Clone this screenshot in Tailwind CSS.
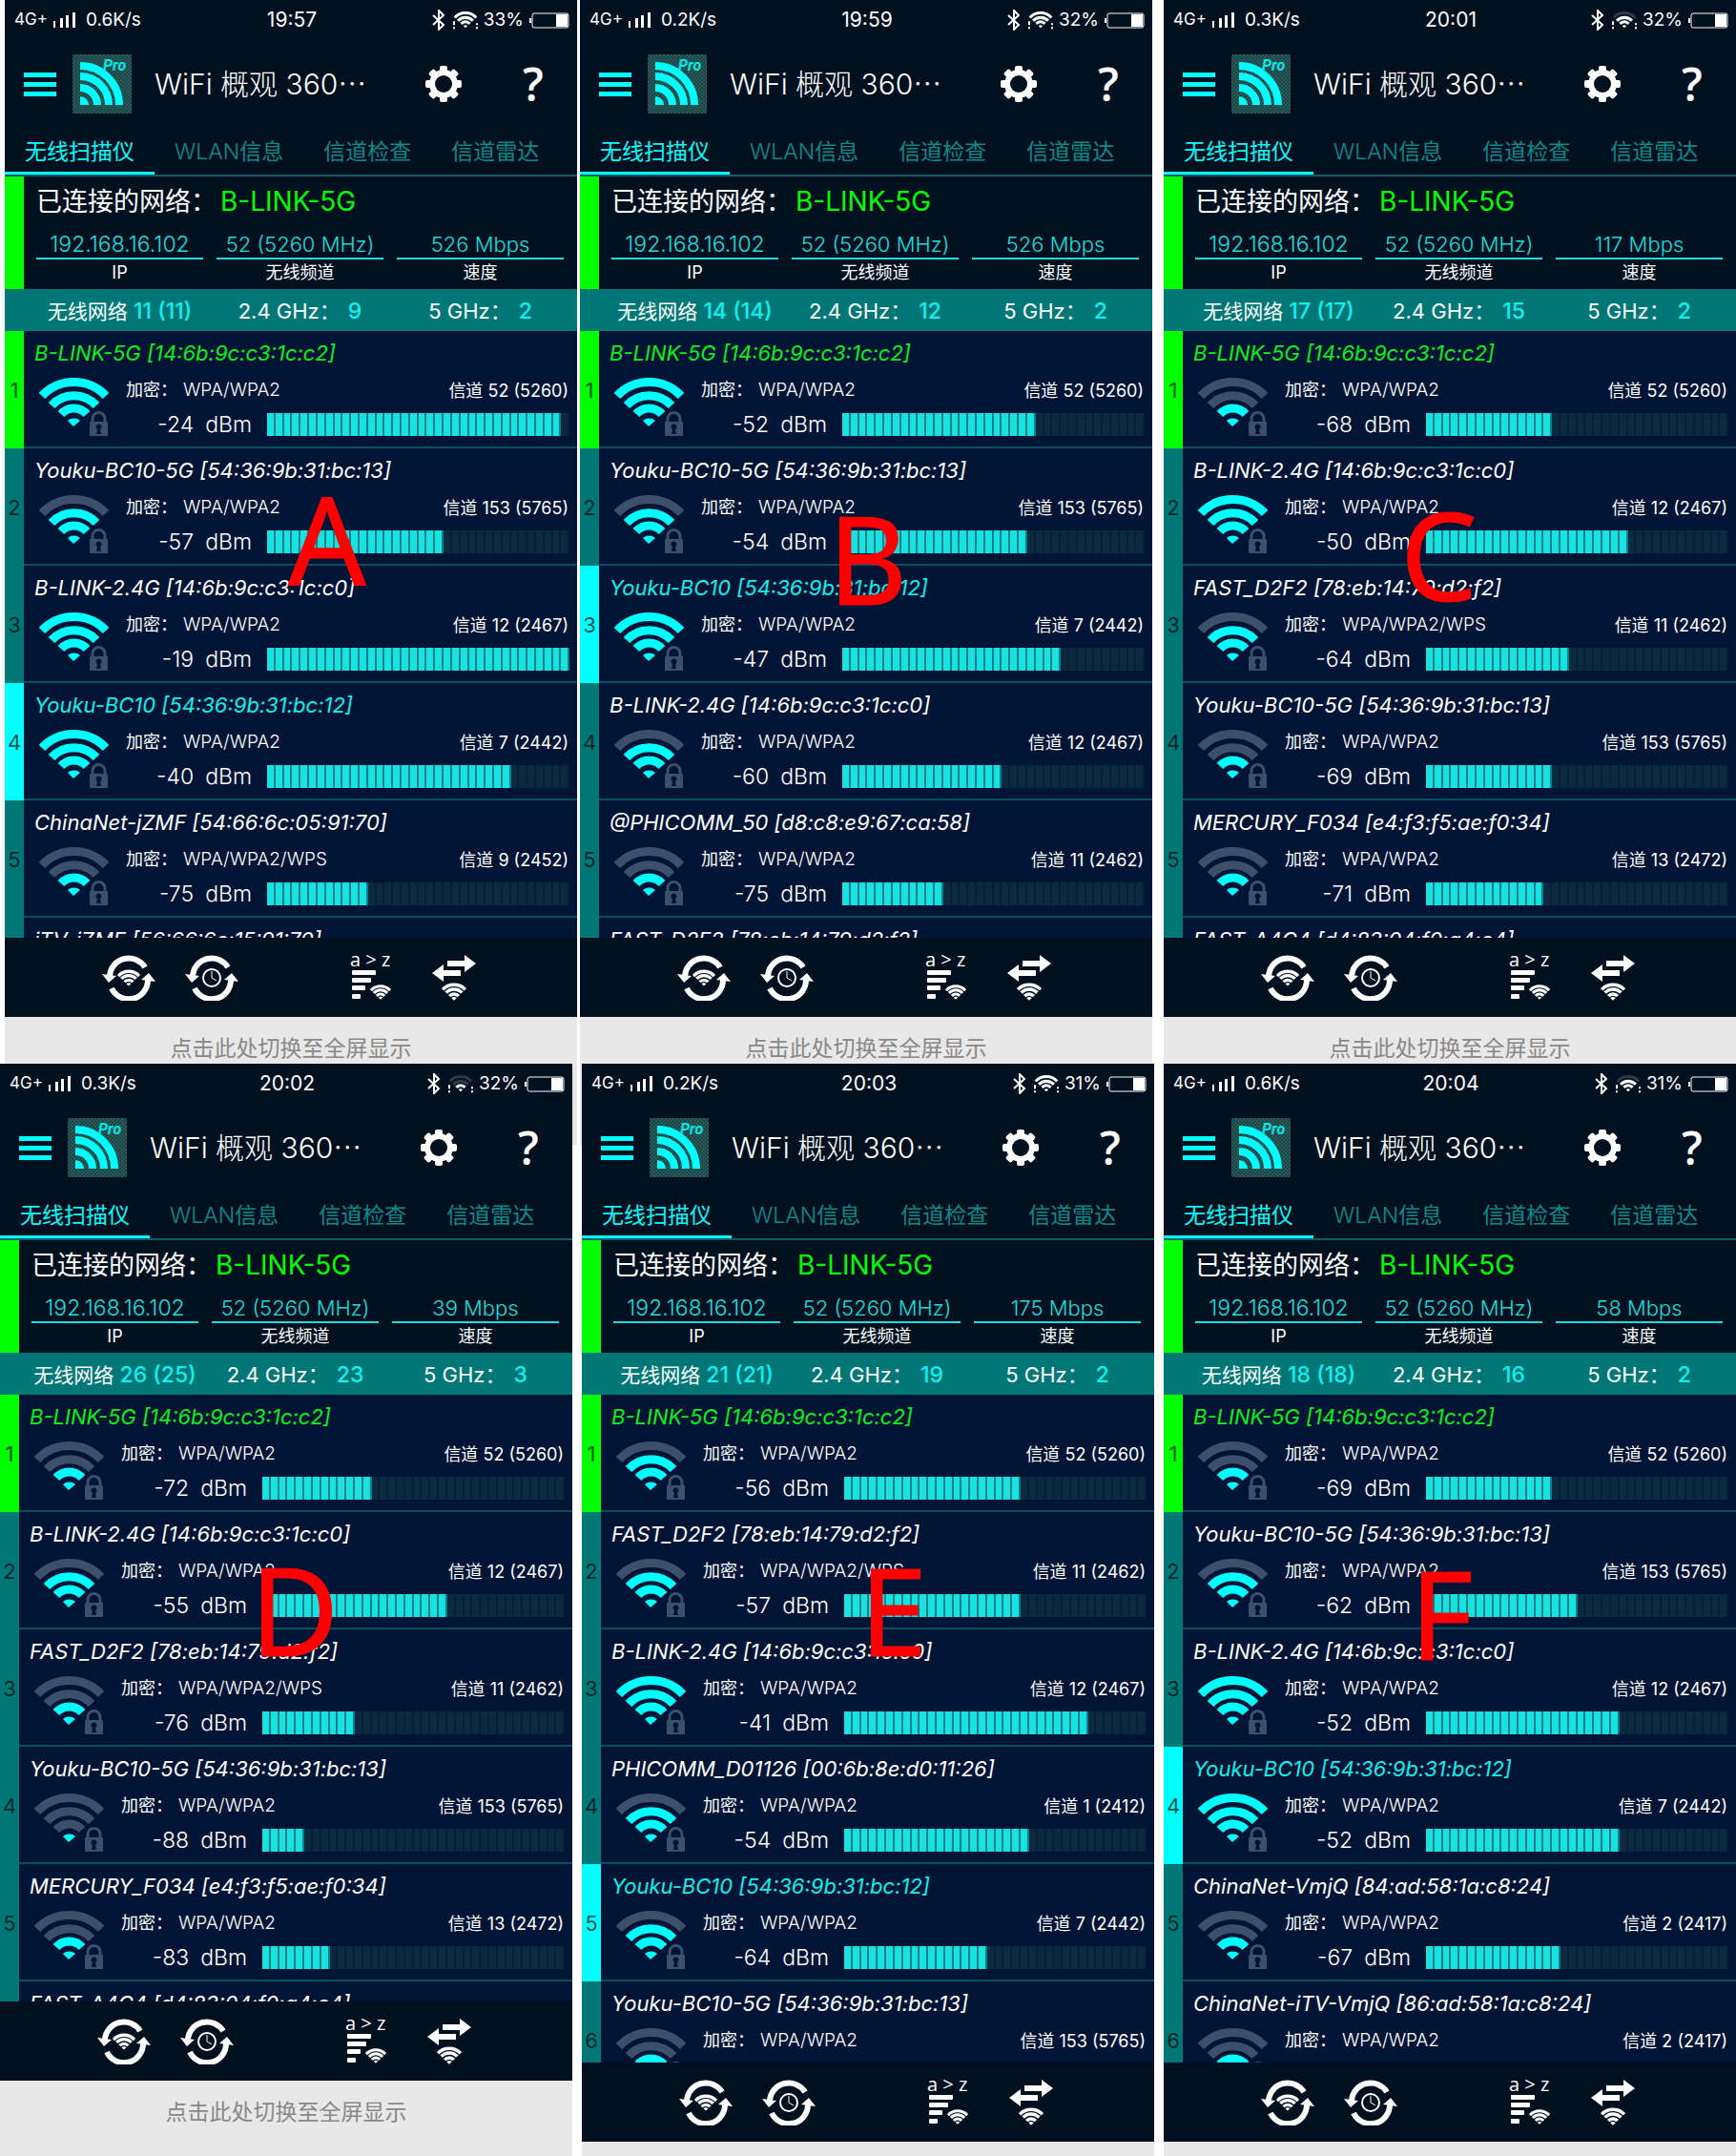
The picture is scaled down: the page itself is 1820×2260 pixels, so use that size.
<!DOCTYPE html>
<html lang="zh-CN">
<head>
    <meta charset="UTF-8">
    <meta name="viewport" content="width=device-width, initial-scale=1.0">
    <title>WiFi 概观 360 Pro</title>
    <script src="https://cdn.jsdelivr.net/npm/@tailwindcss/browser@4"></script>
</head>
<body class="bg-white text-white font-[Inter,'Noto_Sans_CJK_SC',sans-serif]">
    <svg class="absolute size-0">
        <defs>
            <pattern id="dots" width="4" height="4" patternUnits="userSpaceOnUse">
                <rect width="4" height="4" fill="#1b4446"/>
                <rect width="2" height="2" fill="#2c5a58"/>
                <rect x="2" y="2" width="2" height="2" fill="#2c5a58"/>
            </pattern>
        </defs>
        <symbol id="gear" viewBox="0 0 38 38">
            <g fill="currentColor">
                <rect x="15" y="0" width="8" height="38" rx="2"/>
                <rect x="15" y="0" width="8" height="38" rx="2" transform="rotate(45 19 19)"/>
                <rect x="15" y="0" width="8" height="38" rx="2" transform="rotate(90 19 19)"/>
                <rect x="15" y="0" width="8" height="38" rx="2" transform="rotate(135 19 19)"/>
                <circle cx="19" cy="19" r="15"/>
            </g>
            <circle cx="19" cy="19" r="9" fill="#00101f"/>
        </symbol>
        <symbol id="bt" viewBox="0 0 14 22">
            <path d="M1 6 L12 16 L7 21 V1 L12 6 L1 16" fill="none" stroke="currentColor" stroke-width="2"/>
        </symbol>
        <symbol id="wifi" viewBox="0 0 73 52">
            <g fill="none" stroke="currentColor" stroke-width="10">
                <path d="M3 20 A46 46 0 0 1 70 20"/>
                <path d="M13 29 A32 32 0 0 1 60 29"/>
                <path d="M23 39 A18 18 0 0 1 50 39"/>
            </g>
            <path d="M29 45 A10 10 0 0 1 44 45 L36 52 Z" fill="currentColor"/>
        </symbol>
        <symbol id="cycle" viewBox="0 0 56 48">
            <g fill="none" stroke="currentColor" stroke-width="6">
                <path d="M8 22 A20 20 0 0 1 45 13"/>
                <path d="M10 35 A20 20 0 0 0 48 26"/>
            </g>
            <path d="M0 20 L15 22 L7 29 Z M56 28 L41 26 L49 19 Z" fill="currentColor"/>
        </symbol>
        <symbol id="swap" viewBox="0 0 46 48">
            <path d="M16 6 H34 V0 L46 9 L34 18 V12 H16 Z M30 16 H12 V10 L0 19 L12 28 V22 H30 Z" fill="currentColor"/>
        </symbol>
    </svg>

    <main>
        <div id="rowTop" class="flex items-start pl-[5px]"></div>
        <div id="rowBottom" class="relative flex items-start -mt-[85px]"></div>
    </main>
</body>
</html>

<script>
    const WPA = "WPA/WPA2";
    const WPS = "WPA/WPA2/WPS";

    // ap : [name, mac, security, channel, dBm, arcs lit, bars lit]
    const shots = [
        { label: "A", labelPos: "left-[297px] top-[500px]", gap: "mr-[3px]", rate: "0.6K/s", time: "19:57", battery: 33, signal: 4, speed: 526, total: "11 (11)", g2: 9, g5: 2, list: "h-[636px]", foot: "h-[134px]", mine: 3, aps: [
            ["B-LINK-5G", "14:6b:9c:c3:1c:c2", WPA, "52 (5260)", -24, 4, 35],
            ["Youku-BC10-5G", "54:36:9b:31:bc:13", WPA, "153 (5765)", -57, 3, 21],
            ["B-LINK-2.4G", "14:6b:9c:c3:1c:c0", WPA, "12 (2467)", -19, 4, 36],
            ["Youku-BC10", "54:36:9b:31:bc:12", WPA, "7 (2442)", -40, 4, 29],
            ["ChinaNet-jZMF", "54:66:6c:05:91:70", WPS, "9 (2452)", -75, 2, 12],
            ["iTV-jZMF", "56:66:6c:15:91:70", WPA, "9 (2452)", -75, 2, 12]
        ]},
        { label: "B", labelPos: "left-[260px] top-[521px]", gap: "mr-3", rate: "0.2K/s", time: "19:59", battery: 32, signal: 4, speed: 526, total: "14 (14)", g2: 12, g5: 2, list: "h-[636px]", foot: "h-[134px]", mine: 2, aps: [
            ["B-LINK-5G", "14:6b:9c:c3:1c:c2", WPA, "52 (5260)", -52, 4, 23],
            ["Youku-BC10-5G", "54:36:9b:31:bc:13", WPA, "153 (5765)", -54, 3, 22],
            ["Youku-BC10", "54:36:9b:31:bc:12", WPA, "7 (2442)", -47, 4, 26],
            ["B-LINK-2.4G", "14:6b:9c:c3:1c:c0", WPA, "12 (2467)", -60, 3, 19],
            ["@PHICOMM_50", "d8:c8:e9:67:ca:58", WPA, "11 (2462)", -75, 2, 12],
            ["FAST_D2F2", "78:eb:14:79:d2:f2", WPS, "11 (2462)", -76, 2, 11]
        ]},
        { label: "C", labelPos: "left-[248px] top-[517px]", gap: "mr-0", rate: "0.3K/s", time: "20:01", battery: 32, signal: 3, speed: 117, total: "17 (17)", g2: 15, g5: 2, list: "h-[636px]", foot: "h-[134px]", mine: -1, aps: [
            ["B-LINK-5G", "14:6b:9c:c3:1c:c2", WPA, "52 (5260)", -68, 2, 15],
            ["B-LINK-2.4G", "14:6b:9c:c3:1c:c0", WPA, "12 (2467)", -50, 4, 24],
            ["FAST_D2F2", "78:eb:14:79:d2:f2", WPS, "11 (2462)", -64, 3, 17],
            ["Youku-BC10-5G", "54:36:9b:31:bc:13", WPA, "153 (5765)", -69, 2, 15],
            ["MERCURY_F034", "e4:f3:f5:ae:f0:34", WPA, "13 (2472)", -71, 2, 14],
            ["FAST_A4C4", "d4:83:04:f0:a4:c4", WPA, "13 (2472)", -75, 2, 12]
        ]},
        { label: "D", labelPos: "left-[262px] top-[508px]", gap: "mr-[10px]", rate: "0.3K/s", time: "20:02", battery: 32, signal: 2, speed: 39, total: "26 (25)", g2: 23, g5: 3, list: "h-[636px]", foot: "h-[79px]", mine: -1, aps: [
            ["B-LINK-5G", "14:6b:9c:c3:1c:c2", WPA, "52 (5260)", -72, 2, 13],
            ["B-LINK-2.4G", "14:6b:9c:c3:1c:c0", WPA, "12 (2467)", -55, 3, 22],
            ["FAST_D2F2", "78:eb:14:79:d2:f2", WPS, "11 (2462)", -76, 2, 11],
            ["Youku-BC10-5G", "54:36:9b:31:bc:13", WPA, "153 (5765)", -88, 1, 5],
            ["MERCURY_F034", "e4:f3:f5:ae:f0:34", WPA, "13 (2472)", -83, 2, 8],
            ["FAST_A4C4", "d4:83:04:f0:a4:c4", WPA, "13 (2472)", -85, 1, 7]
        ]},
        { label: "E", labelPos: "left-[291px] top-[508px]", gap: "mr-[10px]", rate: "0.2K/s", time: "20:03", battery: 31, signal: 4, speed: 175, total: "21 (21)", g2: 19, g5: 2, list: "h-[700px]", foot: "h-[15px]", mine: 4, aps: [
            ["B-LINK-5G", "14:6b:9c:c3:1c:c2", WPA, "52 (5260)", -56, 3, 21],
            ["FAST_D2F2", "78:eb:14:79:d2:f2", WPS, "11 (2462)", -57, 3, 21],
            ["B-LINK-2.4G", "14:6b:9c:c3:1c:c0", WPA, "12 (2467)", -41, 4, 29],
            ["PHICOMM_D01126", "00:6b:8e:d0:11:26", WPA, "1 (2412)", -54, 3, 22],
            ["Youku-BC10", "54:36:9b:31:bc:12", WPA, "7 (2442)", -64, 3, 17],
            ["Youku-BC10-5G", "54:36:9b:31:bc:13", WPA, "153 (5765)", -67, 2, 16]
        ]},
        { label: "F", labelPos: "left-[258px] top-[512px]", gap: "mr-0", rate: "0.6K/s", time: "20:04", battery: 31, signal: 3, speed: 58, total: "18 (18)", g2: 16, g5: 2, list: "h-[700px]", foot: "h-[15px]", mine: 3, aps: [
            ["B-LINK-5G", "14:6b:9c:c3:1c:c2", WPA, "52 (5260)", -69, 2, 15],
            ["Youku-BC10-5G", "54:36:9b:31:bc:13", WPA, "153 (5765)", -62, 3, 18],
            ["B-LINK-2.4G", "14:6b:9c:c3:1c:c0", WPA, "12 (2467)", -52, 4, 23],
            ["Youku-BC10", "54:36:9b:31:bc:12", WPA, "7 (2442)", -52, 4, 23],
            ["ChinaNet-VmjQ", "84:ad:58:1a:c8:24", WPA, "2 (2417)", -67, 2, 16],
            ["ChinaNet-iTV-VmjQ", "86:ad:58:1a:c8:24", WPA, "2 (2417)", -68, 2, 15]
        ]}
    ];

    // wifi fan, n = arcs lit counted from the bottom
    const fan = (n, on, off) => {
        const c = (i) => (n >= i ? on : off);
        return `
            <g fill="none" stroke-width="9">
                <path d="M3 19 A46 46 0 0 1 70 19" stroke="${c(4)}"/>
                <path d="M13 29 A32 32 0 0 1 60 29" stroke="${c(3)}"/>
                <path d="M23 38 A18 18 0 0 1 50 38" stroke="${c(2)}"/>
            </g>
            <path d="M30 45 A10 10 0 0 1 43 45 L36 51 Z" fill="${c(1)}"/>`;
    };

    const apRow = (ap, i, mine) => {
        const [name, mac, sec, channel, dbm, arcs, bars] = ap;
        const side = i === 0 ? "bg-[#00ff00]" : i === mine ? "bg-[#00ffff]" : "bg-[#007777]";
        const title = i === 0 ? "text-[#0cf01c]" : i === mine ? "text-[#12f0ee]" : "text-white";
        let cells = "";
        for (let k = 0; k < 36; k++) {
            cells += k < bars
                ? `<i class="flex-1 border-r-2 bg-[#18e2e0] border-[#08808c]"></i>`
                : `<i class="flex-1 border-r-2 bg-[#0c2a3f] border-[#061f39]"></i>`;
        }
        return `
        <li class="flex h-[123px]">
            <span class="flex w-5 items-center justify-center pt-0.5 text-[22px] text-black/70 ${side}">${i + 1}</span>
            <div class="flex-1 border-b-2 border-[#06505f] pl-[11px]">
                <h3 class="h-11 text-[22px] leading-[46px] italic whitespace-nowrap ${title}">${name} [${mac}]</h3>
                <div class="flex pl-[5px]">
                    <svg class="mt-[5px] h-[62px] w-[73px] shrink-0" viewBox="0 0 73 62">
                        ${fan(arcs, "#00ffff", "#3c506c")}
                        <path d="M56 47 V43 A6 6 0 0 1 69 43 V47" fill="none" stroke="#3c506c" stroke-width="3"/>
                        <rect x="53" y="46" width="19" height="15" rx="1" fill="#3c506c"/>
                        <path d="M60 59 L61 54 A3 3 0 1 1 64 54 L65 59 Z" fill="#001535"/>
                    </svg>
                    <div class="flex-1 pl-[18px]">
                        <p class="flex h-9 items-center justify-between pr-[9px] text-[18px]">
                            <span>加密：<span class="ml-1.5 text-[19px] font-light">${sec}</span></span>
                            <span>信道 ${channel}</span>
                        </p>
                        <div class="flex h-9 items-center pr-2">
                            <p class="flex w-[132px] justify-end gap-3 text-[23px] font-light"><span>${dbm}</span><span>dBm</span></p>
                            <div class="ml-4 flex h-6 flex-1" role="meter" aria-label="${name}" aria-valuemin="-100" aria-valuemax="0" aria-valuenow="${dbm}">${cells}</div>
                        </div>
                    </div>
                </div>
            </div>
        </li>`;
    };

    const screen = (s) => `
        <article class="relative flex-1 bg-[#00101f] ${s.gap}">
            <div class="grid h-[42px] grid-cols-3 items-center pl-[10px] pr-2 text-[19px]">
                <div class="flex items-center">
                    <span class="text-[17px]">4G+</span>
                    <svg class="ml-1.5 h-4 w-6" viewBox="0 0 24 16" fill="#fff">
                        <rect x="0" y="9" width="2" height="7"/><rect x="7" y="6" width="3" height="10"/>
                        <rect x="13" y="3" width="3" height="13"/><rect x="20" y="0" width="3" height="16"/>
                    </svg>
                    <span class="ml-2.5">${s.rate}</span>
                </div>
                <time class="text-center text-[21px]">${s.time}</time>
                <div class="flex items-center justify-end">
                    <svg class="h-[22px] w-[14px]"><use href="#bt"/></svg>
                    <svg class="ml-2 h-[19px] w-[26px]" viewBox="-2 0 77 56">
                        ${fan(s.signal, "#fff", "#2c3a48")}
                        <path d="M1 30 V42 M1 48 V54 M72 36 V42 M72 48 V54" stroke="#fff" stroke-width="6"/>
                    </svg>
                    <span class="ml-1.5">${s.battery}%</span>
                    <svg class="ml-1.5 h-[17px] w-[42px]" viewBox="0 0 42 17">
                        <rect x="0" y="6" width="2" height="5" fill="#fff"/>
                        <rect x="3" y="1" width="38" height="15" rx="2" fill="none" stroke="#fff"/>
                        <rect x="28" y="2" width="12" height="13" fill="#fff"/>
                    </svg>
                </div>
            </div>

            <header class="flex h-[92px] items-center pl-5 pr-[35px]">
                <button aria-label="菜单" class="flex flex-col gap-[5px]">
                    <i class="h-[5px] w-[34px] bg-[#00ffff]"></i>
                    <i class="h-[5px] w-[34px] bg-[#00ffff]"></i>
                    <i class="h-[5px] w-[34px] bg-[#00ffff]"></i>
                </button>
                <svg class="ml-[17px] h-[62px] w-[62px]" viewBox="0 0 62 62">
                    <rect width="62" height="62" rx="2" fill="url(#dots)"/>
                    <path d="M8 44 A9 9 0 0 1 17 53 L8 53 Z" fill="#00ffff"/>
                    <g fill="none" stroke="#00ffff" stroke-width="8">
                        <path d="M8 35 A18 18 0 0 1 26 53"/>
                        <path d="M8 23 A30 30 0 0 1 38 53"/>
                        <path d="M8 12 A41 41 0 0 1 49 53"/>
                    </g>
                    <text x="32" y="17" font-size="16" fill="#00e8e8" class="font-[Roboto,sans-serif] font-bold italic">Pro</text>
                </svg>
                <h1 class="ml-6 flex-1 text-[30px] font-light whitespace-nowrap">WiFi 概观 360⋯</h1>
                <button aria-label="设置"><svg class="size-[38px]"><use href="#gear"/></svg></button>
                <button aria-label="帮助" class="ml-16 w-[22px] text-center font-['Open_Sans',sans-serif] text-[48px] leading-none font-semibold">?</button>
            </header>

            <nav class="flex h-[51px] border-b-2 border-[#0b5f66] text-[23px] text-[#0c8a8a]">
                <a href="#" class="border-b-3 border-[#00ffff] px-[21px] pt-1 leading-[42px] text-[#00ffff]">无线扫描仪</a>
                <a href="#" class="px-[21px] pt-1 leading-[42px]"><span class="font-light">WLAN</span>信息</a>
                <a href="#" class="px-[21px] pt-1 leading-[42px]">信道检查</a>
                <a href="#" class="px-[21px] pt-1 leading-[42px]">信道雷达</a>
            </nav>

            <section class="flex h-[118px]">
                <i class="w-5 bg-[#00ff00]"></i>
                <div class="flex-1 pl-[13px] pr-[14px]">
                    <h2 class="h-[52px] text-[27px] leading-[52px]">已连接的网络：<span class="ml-1 text-[28px] text-[#00ff00]">B-LINK-5G</span></h2>
                    <dl class="grid grid-cols-3 gap-[14px] text-center">
                        <div class="flex flex-col-reverse">
                            <dt class="h-[26px] text-[18px] leading-[28px]">IP</dt>
                            <dd class="h-[35px] border-b-2 border-[#18dede] pt-1.5 text-[23px] leading-[26px] font-light text-[#18dede]">192.168.16.102</dd>
                        </div>
                        <div class="flex flex-col-reverse">
                            <dt class="h-[26px] text-[18px] leading-[28px]">无线频道</dt>
                            <dd class="h-[35px] border-b-2 border-[#18dede] pt-1.5 text-[22px] leading-[26px] font-light text-[#18dede]">52 (5260 MHz)</dd>
                        </div>
                        <div class="flex flex-col-reverse">
                            <dt class="h-[26px] text-[18px] leading-[28px]">速度</dt>
                            <dd class="h-[35px] border-b-2 border-[#18dede] pt-1.5 text-[22px] leading-[26px] font-light text-[#18dede]">${s.speed} Mbps</dd>
                        </div>
                    </dl>
                </div>
            </section>

            <section class="grid h-11 grid-cols-3 gap-[14px] bg-[#007777] pt-0.5 pl-[33px] pr-[14px] text-center text-[22px] leading-[42px] whitespace-nowrap">
                <p><span class="text-[21px]">无线网络</span> <b class="text-[23px] font-medium text-[#10f0f0]">${s.total}</b></p>
                <p>2.4 GHz：<b class="ml-2 text-[23px] font-medium text-[#10f0f0]">${s.g2}</b></p>
                <p>5 GHz：<b class="ml-2 text-[23px] font-medium text-[#10f0f0]">${s.g5}</b></p>
            </section>

            <ol class="overflow-hidden bg-[#001535] ${s.list}">
                ${s.aps.map((ap, i) => apRow(ap, i, s.mine)).join("")}
            </ol>

            <div class="flex h-[83px] items-center justify-center">
                <button aria-label="刷新" class="flex w-[87px] justify-center">
                    <svg class="h-12 w-14" viewBox="0 0 56 48"><use href="#cycle" width="56" height="48"/><use href="#wifi" x="16" y="15" width="24" height="18"/></svg>
                </button>
                <button aria-label="定时刷新" class="flex w-[87px] justify-center">
                    <svg class="h-12 w-14" viewBox="0 0 56 48" fill="none" stroke="#fff"><use href="#cycle" width="56" height="48" stroke="none"/><circle cx="28" cy="24" r="9" stroke-width="2"/><path d="M28 17 V24 L33 27"/></svg>
                </button>
                <button aria-label="排序" class="ml-20 flex w-[87px] justify-center">
                    <svg class="h-12 w-11" viewBox="0 0 44 48" fill="#fff">
                        <text x="0" y="12" font-size="20" class="font-['Open_Sans',sans-serif]">a &gt; z</text>
                        <rect x="2" y="16" width="25" height="5" rx="1"/><rect x="2" y="24" width="20" height="5" rx="1"/>
                        <rect x="2" y="32" width="14" height="5" rx="1"/><rect x="2" y="41" width="9" height="5" rx="1"/>
                        <use href="#wifi" x="21" y="31" width="22" height="16"/>
                    </svg>
                </button>
                <button aria-label="切换" class="flex w-[87px] justify-center">
                    <svg class="h-12 w-[46px]" viewBox="0 0 46 48"><use href="#swap" width="46" height="48"/><use href="#wifi" x="10" y="29" width="26" height="19"/></svg>
                </button>
            </div>

            <footer class="overflow-hidden bg-[#e8e8e8] text-center ${s.foot}">
                ${s.foot === "h-[15px]" ? "" : `<button class="mt-3 text-[23px] leading-[42px] text-[#888]">点击此处切换至全屏显示</button>`}
            </footer>

            <strong class="absolute font-['Noto_Sans',sans-serif] text-[128px] leading-none font-normal text-[#ff0000] [-webkit-text-stroke:1px_#ff0000] ${s.labelPos}">${s.label}</strong>
        </article>`;

    document.getElementById("rowTop").innerHTML = shots.slice(0, 3).map(screen).join("");
    document.getElementById("rowBottom").innerHTML = shots.slice(3).map(screen).join("");
</script>
